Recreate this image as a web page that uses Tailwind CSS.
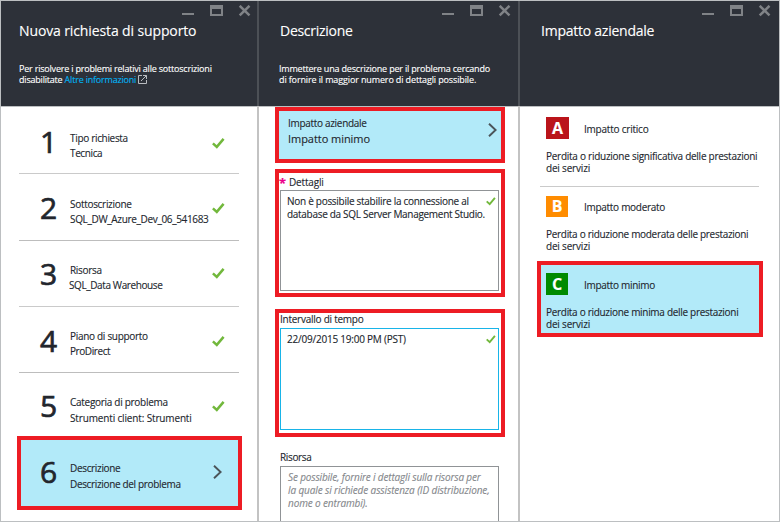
<!DOCTYPE html>
<html lang="it">
<head>
<meta charset="utf-8">
<title>Nuova richiesta di supporto</title>
<script src="https://cdn.jsdelivr.net/npm/@tailwindcss/browser@4"></script>
</head>
<body class="w-[780px] h-[522px] overflow-hidden bg-white font-['Open_Sans','Noto_Sans',sans-serif] text-[10px] text-[#22262d] [-webkit-text-stroke:0.12px]">
<svg class="hidden">
  <symbol id="win" viewBox="0 0 70 12"><path d="M0 8h12v2H0z"/><path fill-rule="evenodd" d="M28 0h13v11H28zM30 4v5h9V4z"/><path d="M57.700 .8 67.500 10.400M67.500 .8 57.700 10.400" fill="none" stroke="currentColor" stroke-width="2.500"/></symbol>
  <symbol id="ok" viewBox="0 0 13 11"><path d="M.9 5.300 4.800 8.900 11.600 .9" fill="none" stroke="#72b83c" stroke-width="2.500"/></symbol>
  <symbol id="chev" viewBox="0 0 9 14"><path d="M1 .8 7.600 7 1 13.200" fill="none" stroke="#4b5459" stroke-width="1.900"/></symbol>
</svg>
<main class="flex w-[780px] h-[522px] border border-[#bcbfc1] whitespace-nowrap">

  <section class="w-[256px] shrink-0">
    <header class="h-[105px] bg-[#2d3139] text-white pl-[18px] pt-1">
      <svg class="w-[70px] h-3 ml-[163px] fill-current text-[#808387]"><use href="#win"/></svg>
      <h1 class="mt-1 text-[14px] leading-5 tracking-[-0.12px]">Nuova richiesta di supporto</h1>
      <div class="mt-[22px] text-[9px] leading-[11px]"><p class="tracking-[-0.2px]">Per risolvere i problemi relativi alle sottoscrizioni</p><p class="tracking-[-0.2px]">disabilitate <span class="text-[#00b4f5]">Altre informazioni</span> <svg class="inline-block align-[-1px] w-[9px] h-[9px]" viewBox="0 0 9 9" fill="none" stroke="#b9bcc0"><path d="M4 .5H.5v8h8V5M5 .5h3.500V4M8.500 .5 3 6"/></svg></p></div>
    </header>
    <div class="h-px bg-[#bcbfc1]"></div>
    <div class="px-[18px]">
      <div class="flex h-[67px] border-b border-[#cacaca]">
        <b class="w-[17px] ml-[21px] mt-[13px] text-[30px] leading-[44px] font-normal [-webkit-text-stroke:0.7px]">1</b>
        <div class="w-[142px] ml-[13px] pt-6 leading-[15px]"><p class="tracking-[-0.32px]">Tipo richiesta</p><p class="tracking-[-0.38px]">Tecnica</p></div>
        <svg class="w-[13px] h-[11px] mt-[31px]"><use href="#ok"/></svg>
      </div>
      <div class="flex h-[67px] border-b border-[#bdbdbd]">
        <b class="w-[17px] ml-[21px] mt-3 text-[30px] leading-[44px] font-normal [-webkit-text-stroke:0.7px]">2</b>
        <div class="w-[142px] ml-[13px] pt-[23px] leading-[15px]"><p class="tracking-[-0.3px]">Sottoscrizione</p><p class="tracking-[-0.34px]">SQL_DW_Azure_Dev_06_541683</p></div>
        <svg class="w-[13px] h-[11px] mt-[29px]"><use href="#ok"/></svg>
      </div>
      <div class="flex h-[66px] border-b border-[#cacaca]">
        <b class="w-[17px] ml-[21px] mt-[11px] text-[30px] leading-[44px] font-normal [-webkit-text-stroke:0.7px]">3</b>
        <div class="w-[142px] ml-[13px] pt-[22px] leading-[15px]"><p class="tracking-[-0.3px]">Risorsa</p><p class="-ml-px tracking-[-0.4px]">SQL_Data Warehouse</p></div>
        <svg class="w-[13px] h-[11px] mt-[27px]"><use href="#ok"/></svg>
      </div>
      <div class="flex h-[66px] border-b border-[#bdbdbd]">
        <b class="w-[17px] ml-[21px] mt-3 text-[30px] leading-[44px] font-normal [-webkit-text-stroke:0.7px]">4</b>
        <div class="w-[142px] ml-[13px] pt-[22px] leading-[15px]"><p class="tracking-[-0.3px]">Piano di supporto</p><p class="tracking-[-0.42px]">ProDirect</p></div>
        <svg class="w-[13px] h-[11px] mt-[29px]"><use href="#ok"/></svg>
      </div>
      <div class="flex h-[63px]">
        <b class="w-[17px] ml-[21px] mt-[11px] text-[30px] leading-[44px] font-normal [-webkit-text-stroke:0.7px]">5</b>
        <div class="w-[142px] ml-[13px] pt-[22px] leading-[15px]"><p class="tracking-[-0.29px]">Categoria di problema</p><p class="pt-px tracking-[-0.15px]">Strumenti client: Strumenti</p></div>
        <svg class="w-[13px] h-[11px] mt-[28px]"><use href="#ok"/></svg>
      </div>
    </div>
    <div class="flex w-[225px] h-[74px] ml-4 border-4 border-[#ed1c24] bg-[#b2eaf9]">
      <b class="w-[17px] ml-[19px] mt-[10px] text-[30px] leading-[44px] font-normal [-webkit-text-stroke:0.7px]">6</b>
      <div class="w-[143px] ml-[13px] pt-5 leading-4"><p class="tracking-[-0.33px]">Descrizione</p><p class="tracking-[-0.34px]">Descrizione del problema</p></div>
      <svg class="w-[9px] h-[14px] mt-[25px]"><use href="#chev"/></svg>
    </div>
  </section>

  <div class="w-[2px] shrink-0"><div class="h-[105px] bg-[#4c5056]"></div><div class="h-[415px] bg-[#c3c3c3]"></div></div>

  <section class="w-[259px] shrink-0 overflow-hidden">
    <header class="h-[105px] bg-[#2d3139] text-white pl-5 pt-1">
      <svg class="w-[70px] h-3 ml-[163px] fill-current text-[#808387]"><use href="#win"/></svg>
      <h1 class="mt-1 ml-px text-[14px] leading-5 tracking-[-0.28px]">Descrizione</h1>
      <div class="mt-[22px] text-[9px] leading-[11px]"><p class="tracking-[-0.19px]">Immettere una descrizione per il problema cercando</p><p class="tracking-[-0.13px]">di fornire il maggior numero di dettagli possibile.</p></div>
    </header>
    <div class="h-px bg-[#bcbfc1]"></div>
    <div class="pl-4">
      <div class="flex w-[230px] h-[56px] border-4 border-[#ed1c24] bg-[#b2eaf9]">
        <div class="w-[200px] ml-[9px] pt-[5px]"><p class="leading-[15px] tracking-[-0.31px]">Impatto aziendale</p><p class="text-[11px] leading-4 tracking-[-0.05px]">Impatto minimo</p></div>
        <svg class="w-[9px] h-[14px] mt-[12px]"><use href="#chev"/></svg>
      </div>
      <div class="mt-[6px] w-[230px] h-[128px] border-4 border-[#ed1c24]">
        <div class="flex h-[17px] leading-[15px] pt-[2px]"><span class="w-[10px] text-[13px] leading-[17px] font-bold text-[#ec008c]">*</span><span class="tracking-[-0.17px]">Dettagli</span></div>
        <div class="flex ml-px w-[219px] h-[101px] border border-[#909396] pl-[6px] pt-[4px]">
          <div class="w-[199px] leading-[13px]"><p class="tracking-[-0.28px]">Non è possibile stabilire la connessione al</p><p class="tracking-[-0.3px]">database da SQL Server Management Studio.</p></div>
          <svg class="w-[10px] h-[9px] mt-[2px]"><use href="#ok"/></svg>
        </div>
      </div>
      <div class="mt-3 w-[230px] h-[128px] border-4 border-[#ed1c24]">
        <p class="h-[15px] ml-px leading-[13px] tracking-[-0.25px]">Intervallo di tempo</p>
        <div class="flex ml-px w-[219px] h-[102px] border border-[#18b4e8] pl-[6px] pt-[4px]">
          <p class="w-[199px] leading-[13px] tracking-[-0.22px]">22/09/2015 19:00 PM (PST)</p>
          <svg class="w-[10px] h-[9px] mt-[2px]"><use href="#ok"/></svg>
        </div>
      </div>
      <p class="mt-[13px] ml-[5px] h-4 leading-[15px] tracking-[-0.34px]">Risorsa</p>
      <div class="ml-[5px] w-[219px] h-[70px] border border-[#909396] pl-[7px] pt-[4px] leading-[13px] italic text-[#85888c]"><p class="tracking-[-0.16px]">Se possibile, fornire i dettagli sulla risorsa per</p><p class="tracking-[-0.12px]">la quale si richiede assistenza (ID distribuzione,</p><p class="tracking-[-0.13px]">nome o entrambi).</p></div>
    </div>
  </section>

  <div class="w-[2px] shrink-0"><div class="h-[105px] bg-[#4c5056]"></div><div class="h-[415px] bg-[#c3c3c3]"></div></div>

  <section class="w-[259px] shrink-0">
    <header class="h-[105px] bg-[#2d3139] text-white pl-5 pt-1">
      <svg class="w-[70px] h-3 ml-[162px] fill-current text-[#808387]"><use href="#win"/></svg>
      <h1 class="mt-1 ml-px text-[14px] leading-5 tracking-[-0.24px]">Impatto aziendale</h1>
    </header>
    <div class="h-px bg-[#bcbfc1]"></div>
    <div class="ml-5 w-[219px] h-[80px] pl-[6px] pt-[10px] border-b border-[#cacaca]">
      <div class="flex"><b class="w-[23px] h-[22px] bg-[#ba141a] text-white text-center text-[16px] leading-[22px]">A</b><p class="ml-[15px] mt-[5px] leading-[15px] tracking-[-0.22px]">Impatto critico</p></div>
      <div class="mt-[11px] leading-3"><p class="tracking-[-0.26px]">Perdita o riduzione significativa delle prestazioni</p><p class="tracking-[-0.19px]">dei servizi</p></div>
    </div>
    <div class="ml-5 w-[219px] h-[74px] pl-[6px] pt-[9px]">
      <div class="flex"><b class="w-[22px] h-[21px] bg-[#ff8c00] text-white text-center text-[16px] leading-[21px]">B</b><p class="ml-[16px] mt-1 leading-[15px] tracking-[-0.29px]">Impatto moderato</p></div>
      <div class="mt-[11px] leading-3"><p class="tracking-[-0.3px]">Perdita o riduzione moderata delle prestazioni</p><p class="tracking-[-0.19px]">dei servizi</p></div>
    </div>
    <div class="ml-[17px] w-[226px] h-[76px] border-4 border-[#ed1c24] bg-[#b2eaf9] pl-[5px] pt-2">
      <div class="flex"><b class="w-[22px] h-[22px] bg-[#008a00] text-white text-center text-[16px] leading-[22px]">C</b><p class="ml-[16px] mt-[5px] leading-[15px] tracking-[-0.3px]">Impatto minimo</p></div>
      <div class="mt-[11px] leading-3"><p class="tracking-[-0.3px]">Perdita o riduzione minima delle prestazioni</p><p class="tracking-[-0.19px]">dei servizi</p></div>
    </div>
  </section>
</main>
</body>
</html>
